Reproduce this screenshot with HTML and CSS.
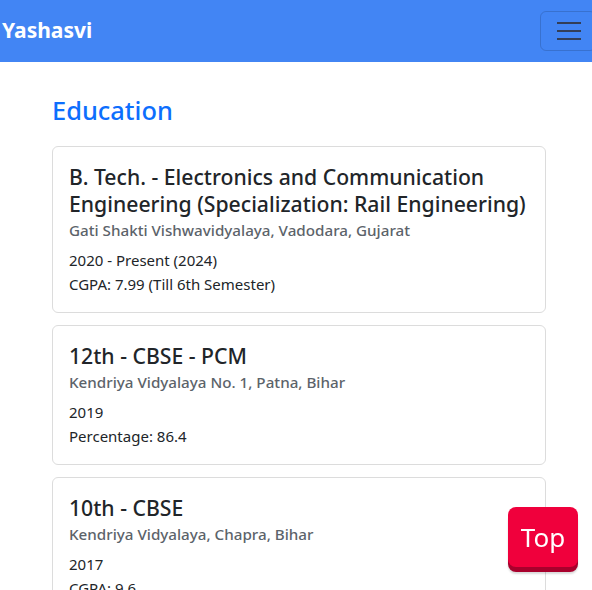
FILE: index.html
```html
<!DOCTYPE html>
<html lang="en">
<head>
<meta charset="utf-8">
<title>Yashasvi</title>
<link rel="stylesheet" href="styles.css">
</head>
<body>
<nav class="navbar">
  <a class="brand" href="#">Yashasvi</a>
  <button class="toggler" aria-label="Toggle navigation">
    <span class="bar"></span><span class="bar"></span><span class="bar"></span>
  </button>
</nav>
<main class="container">
  <h2 class="section-title">Education</h2>
  <div class="card">
    <h5 class="card-title">B. Tech. - Electronics and Communication Engineering (Specialization: Rail Engineering)</h5>
    <h6 class="card-subtitle">Gati Shakti Vishwavidyalaya, Vadodara, Gujarat</h6>
    <p class="card-text">2020 - Present (2024)<br>CGPA: 7.99 (Till 6th Semester)</p>
  </div>
  <div class="card">
    <h5 class="card-title">12th - CBSE - PCM</h5>
    <h6 class="card-subtitle">Kendriya Vidyalaya No. 1, Patna, Bihar</h6>
    <p class="card-text">2019<br>Percentage: 86.4</p>
  </div>
  <div class="card">
    <h5 class="card-title">10th - CBSE</h5>
    <h6 class="card-subtitle">Kendriya Vidyalaya, Chapra, Bihar</h6>
    <p class="card-text">2017<br>CGPA: 9.6</p>
  </div>
</main>
<button class="top-btn">Top</button>
</body>
</html>
```
FILE: styles.css
```css
* { box-sizing: border-box; }
html, body { margin: 0; padding: 0; }
body {
  font-family: "Noto Sans", "Open Sans", sans-serif;
  color: #212529;
  background: #fff;
  font-size: 16px;
  line-height: 1.5;
  overflow: hidden;
  height: 590px;
}
.navbar {
  height: 62px;
  background: #4285f4;
  display: flex;
  align-items: center;
  justify-content: space-between;
  padding: 0 0 0 2px;
}
.brand {
  color: #fff;
  font-weight: 700;
  font-size: 21px;
  text-decoration: none;
}
.toggler {
  width: 56px;
  height: 40px;
  margin-right: -4px;
  background: transparent;
  border: 1px solid rgba(0,0,0,0.15);
  border-radius: 6px;
  display: flex;
  flex-direction: column;
  align-items: center;
  justify-content: center;
  gap: 6px;
  padding: 0 0 0 2px;
}
.bar {
  display: block;
  width: 24px;
  height: 2px;
  background: #333e57;
}
.container {
  padding: 33px 46px 0 52px;
}
.section-title {
  margin: 0 0 21px;
  font-size: 25.4px;
  font-weight: 500;
  line-height: 1.2;
  color: #0d6efd;
}
.card {
  border: 1px solid #dcdcdc;
  border-radius: 6px;
  padding: 16px 16px 16px;
  margin-bottom: 12px;
}
.card-title {
  margin: 0 0 1px;
  font-size: 21.2px;
  font-weight: 500;
  line-height: 27px;
  color: #212529;
}
.card-subtitle {
  margin: 0 0 6px;
  font-size: 15.2px;
  font-weight: 500;
  line-height: 24px;
  color: #5c636a;
}
.card-text {
  margin: 0;
  font-size: 15px;
  line-height: 24px;
}
.top-btn {
  position: fixed;
  left: 508px;
  top: 507px;
  width: 70px;
  height: 60px;
  background: #f0003c;
  color: #fff;
  border: none;
  border-radius: 8px;
  font-family: "Noto Sans", sans-serif;
  font-size: 26px;
  box-shadow: 0 5px 0 #a8002c, 0 7px 2px rgba(0,0,0,0.15);
  padding: 0;
}
```
